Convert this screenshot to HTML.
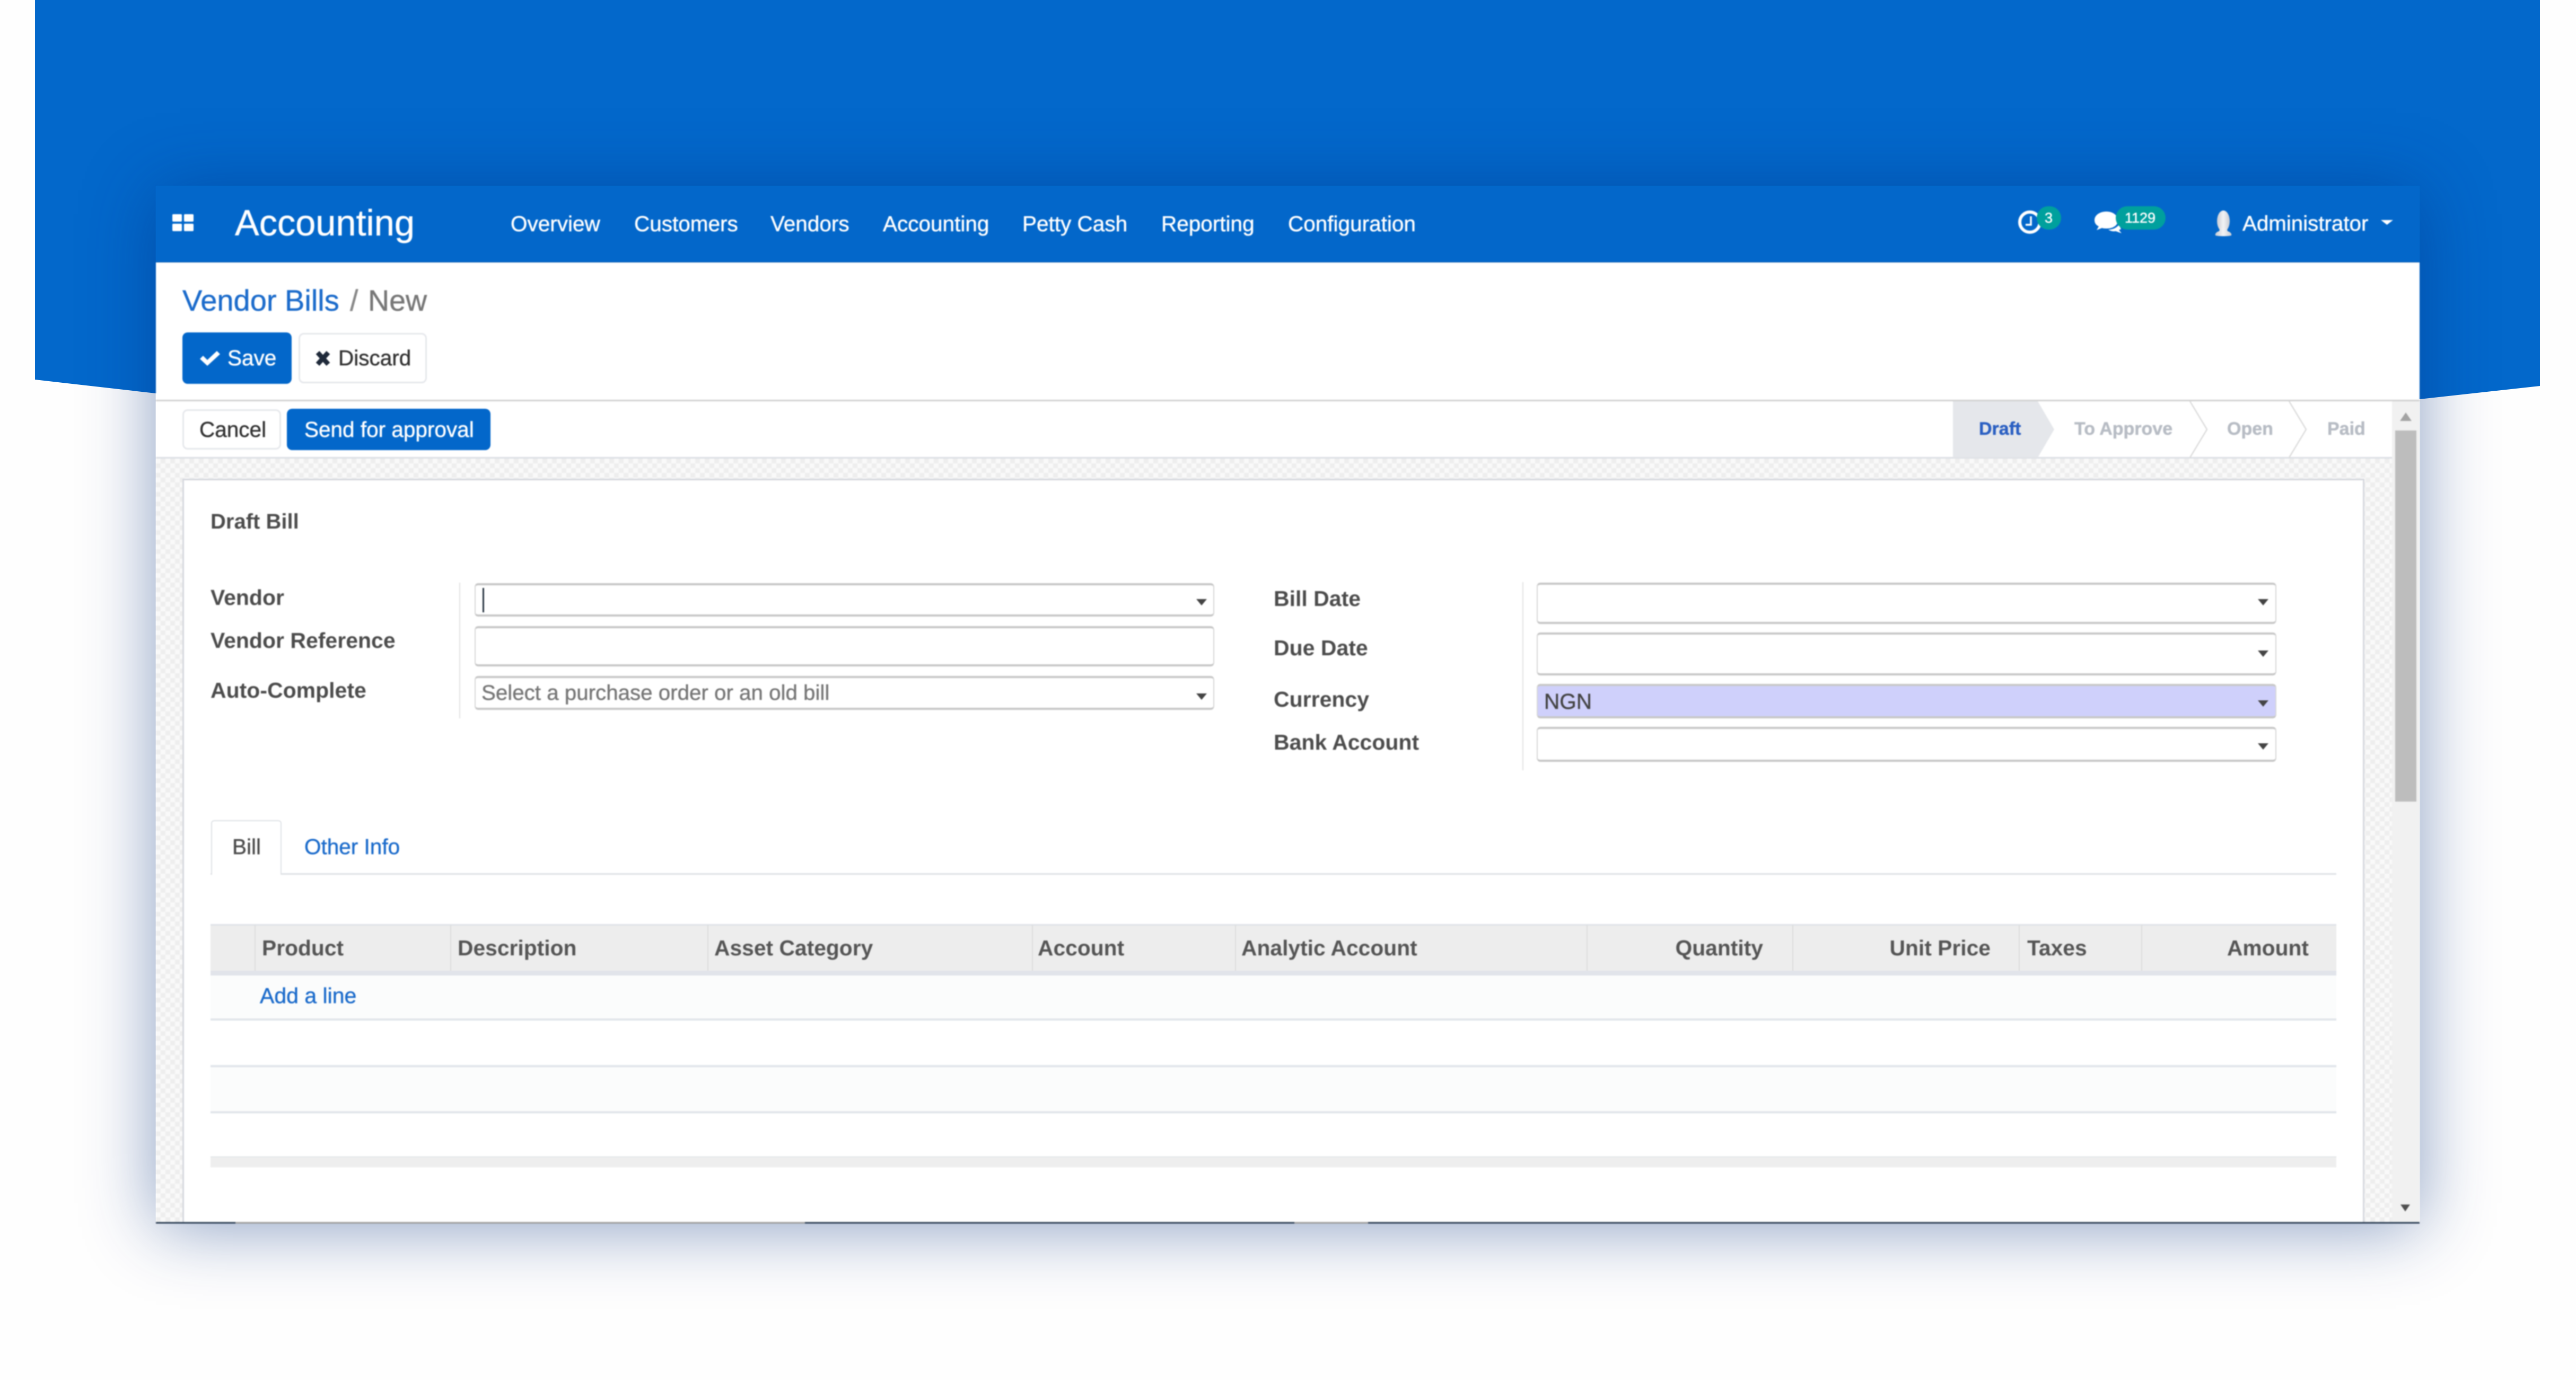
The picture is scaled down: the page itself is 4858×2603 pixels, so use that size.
<!DOCTYPE html>
<html lang="en"><head><meta charset="utf-8"><title>Vendor Bills / New</title>
<style>
html,body{margin:0;padding:0;background:#fefefe}
#page{position:relative;width:4858px;height:2603px;overflow:hidden;background:#fefefe;font-family:"Liberation Sans",Arial,sans-serif;font-size:40.5px;color:#4c4c4c}
#page div,#page svg,#page span{position:absolute}
#blue{left:0;top:0;width:4858px;height:800px;background:#0368cb;clip-path:polygon(66px 0,4790px 0,4790px 728px,4563px 753px,294px 742px,66px 716px)}
#shadow{left:294px;top:351px;width:4269px;height:1956px;box-shadow:0 8px 150px rgba(0,45,125,.46)}
#ui{left:0;top:0;width:4858px;height:2603px;filter:blur(1.1px)}
.t{line-height:0;white-space:nowrap;-webkit-text-stroke:.5px currentColor}
.b{font-weight:bold;-webkit-text-stroke:0}
.w{color:#fff}
.l{color:#1b6bcb}
.btn{box-sizing:border-box;border-radius:10px}
.pri{background:#0367ca}
.sec{background:#fff;border:3px solid #e6e8ec}
.in{box-sizing:border-box;left:895px;width:1395px;background:#fff;border:2px solid #d8d8d8;border-top:4px solid #c8c8c8;border-bottom:4px solid #c8c8c8;border-radius:7px}
.r{left:2898px}
.car{width:0;height:0;border-left:10px solid transparent;border-right:10px solid transparent;border-top:12px solid #444}
.sep{top:1745px;width:2px;height:86px;background:#dcdcdc}
.ln{left:397px;width:4009px;height:4px;background:#e1e5ea}
.st{font-size:34px;font-weight:bold;color:#b7bcc4}
.h{font-size:40.8px;color:#555;top:1788px}
.lb{font-size:41px}
</style></head><body>
<div id="page">
<div id="blue"></div>
<div id="shadow"></div>
<div id="ui">
  <!-- nav -->
  <div style="left:294px;top:351px;width:4269px;height:143px;background:#0367ca;border-bottom:3px solid #0354a8"></div>
  <svg style="left:0;top:0" width="4858" height="520" viewBox="0 0 4858 520">
    <g fill="#fff"><rect x="325" y="404" width="18" height="14" rx="2"/><rect x="347" y="404" width="18" height="14" rx="2"/><rect x="325" y="422" width="18" height="14" rx="2"/><rect x="347" y="422" width="18" height="14" rx="2"/></g>
    <!-- clock -->
    <circle cx="3828" cy="419" r="19" fill="none" stroke="#fff" stroke-width="6"/>
    <path d="M3830 408V424H3820" fill="none" stroke="#fff" stroke-width="3.5"/>
    <!-- chat -->
    <path fill="#fff" d="M3972 399C3986 399 3994 407 3994 416C3994 425 3985 431 3974 431C3970 431 3967 431 3964 430L3954 434L3958 427C3952 424 3950 420 3950 415C3950 406 3960 399 3972 399Z"/>
    <path fill="#fff" d="M3976 433C3986 433 3992 429 3996 424L4000 432L3996 434L4001 440L3990 436C3985 437 3980 436 3976 433Z"/>
    <!-- avatar -->
    <defs><linearGradient id="av" x1="0" x2="1"><stop offset="0" stop-color="#c8ccd4"/><stop offset=".5" stop-color="#f2f3f5"/><stop offset="1" stop-color="#c8ccd4"/></linearGradient></defs>
    <ellipse cx="4193" cy="417" rx="12" ry="20" fill="url(#av)"/>
    <path d="M4187 430H4199L4201 436C4207 438 4209 441 4208 444C4205 446 4181 446 4178 444C4177 441 4179 438 4185 436Z" fill="url(#av)"/>
    <path d="M4490 415H4513L4501.5 424Z" fill="#fff"/>
  </svg>
  <div class="t w" style="left:443px;top:421px;font-size:68.5px">Accounting</div>
  <div class="t w" style="left:963px;top:422px">Overview</div>
  <div class="t w" style="left:1196px;top:422px">Customers</div>
  <div class="t w" style="left:1453px;top:422px">Vendors</div>
  <div class="t w" style="left:1665px;top:422px">Accounting</div>
  <div class="t w" style="left:1928px;top:422px">Petty Cash</div>
  <div class="t w" style="left:2190px;top:422px">Reporting</div>
  <div class="t w" style="left:2429px;top:422px">Configuration</div>
  <div style="left:3841px;top:389px;width:46px;height:44px;border-radius:22px;background:#00a09d"></div>
  <div class="t w" style="left:3856px;top:411px;font-size:27px">3</div>
  <div style="left:3990px;top:389px;width:94px;height:44px;border-radius:22px;background:#00a09d"></div>
  <div class="t w" style="left:4007px;top:411px;font-size:27px">1129</div>
  <div class="t w" style="left:4229px;top:422px;font-size:40.3px">Administrator</div>

  <!-- control panel -->
  <div style="left:294px;top:495px;width:4269px;height:261px;background:#fff"></div>
  <div class="t l" style="left:344px;top:567px;font-size:56px">Vendor Bills</div>
  <div class="t" style="left:660px;top:567px;font-size:55.5px;color:#888">/</div>
  <div class="t" style="left:694px;top:567px;font-size:55.5px;color:#777">New</div>
  <div class="btn pri" style="left:344px;top:627px;width:206px;height:97px"></div>
  <div class="btn sec" style="left:563px;top:628px;width:242px;height:95px"></div>
  <svg style="left:0;top:600px" width="900" height="120" viewBox="0 600 900 120">
    <path fill="#fff" d="M377 677L383 671L391 679L409 662L415 668L391 690Z"/>
    <path stroke="#1f2a3a" stroke-width="9" d="M599 665L619 687M619 665L599 687"/>
  </svg>
  <div class="t w" style="left:429px;top:675px">Save</div>
  <div class="t" style="left:638px;top:675px;color:#333">Discard</div>

  <!-- statusbar -->
  <div style="left:294px;top:754px;width:4269px;height:111px;background:#fff;border-top:3px solid #d2d2d2;border-bottom:3px solid #dcdfe4;box-sizing:border-box"></div>
  <div class="btn sec" style="left:344px;top:772px;width:186px;height:76px"></div>
  <div class="btn pri" style="left:541px;top:771px;width:384px;height:78px"></div>
  <div class="t" style="left:376px;top:810px;color:#333">Cancel</div>
  <div class="t w" style="left:574px;top:810px">Send for approval</div>
  <svg style="left:3680px;top:757px" width="840" height="106" viewBox="3680 757 840 106">
    <path d="M3683 757H3843L3874 810L3843 863H3683Z" fill="#e5e7eb"/>
    <path d="M4130 757L4162 810L4130 863M4317 757L4349 810L4317 863" fill="none" stroke="#dcdcdc" stroke-width="2.5"/>
  </svg>
  <div class="t st" style="left:3732px;top:809px;color:#2a5fc2">Draft</div>
  <div class="t st" style="left:3912px;top:809px">To Approve</div>
  <div class="t st" style="left:4200px;top:809px">Open</div>
  <div class="t st" style="left:4389px;top:809px">Paid</div>

  <!-- sheet bg -->
  <div style="left:294px;top:865px;width:4217px;height:1441px;background:repeating-conic-gradient(#eeeeee 0 25%,#f9f9f9 0 50%) 0 0/18px 18px"></div>
  <div style="left:344px;top:903px;width:4115px;height:1403px;box-sizing:border-box;background:#fff;border:3px solid #d6d8de;border-bottom:0"></div>

  <!-- scrollbar -->
  <div style="left:4511px;top:757px;width:52px;height:1549px;background:#f1f1f1"></div>
  <div style="left:4517px;top:812px;width:40px;height:700px;background:#bdbdbd"></div>
  <svg style="left:4511px;top:757px" width="52" height="1549" viewBox="4511 757 52 1549">
    <path d="M4537 778L4548 794H4526Z" fill="#a3a3a3"/>
    <path d="M4527 2272H4545L4536 2285Z" fill="#505050"/>
  </svg>

  <!-- form -->
  <div class="t b" style="left:397px;top:984px;font-size:40px">Draft Bill</div>
  <div class="t b lb" style="left:397px;top:1127px">Vendor</div>
  <div class="t b lb" style="left:397px;top:1208px">Vendor Reference</div>
  <div class="t b lb" style="left:397px;top:1302px">Auto-Complete</div>
  <div style="left:866px;top:1099px;width:2px;height:256px;background:#e2e2e2"></div>
  <div class="in" style="top:1100px;height:63px"></div>
  <div style="left:910px;top:1109px;width:3px;height:46px;background:#26323f"></div>
  <div class="car" style="left:2256px;top:1130px"></div>
  <div class="in" style="top:1181px;height:76px"></div>
  <div class="in" style="top:1275px;height:64px"></div>
  <div class="t" style="left:908px;top:1307px;color:#777;font-size:40.3px">Select a purchase order or an old bill</div>
  <div class="car" style="left:2256px;top:1308px"></div>

  <div class="t b lb" style="left:2402px;top:1129px">Bill Date</div>
  <div class="t b lb" style="left:2402px;top:1222px">Due Date</div>
  <div class="t b lb" style="left:2402px;top:1319px">Currency</div>
  <div class="t b lb" style="left:2402px;top:1400px">Bank Account</div>
  <div style="left:2871px;top:1098px;width:2px;height:355px;background:#e2e2e2"></div>
  <div class="in r" style="top:1099px;height:78px"></div>
  <div class="car" style="left:4258px;top:1130px"></div>
  <div class="in r" style="top:1193px;height:81px"></div>
  <div class="car" style="left:4258px;top:1227px"></div>
  <div class="in r" style="top:1290px;height:65px;background:#cfd0fb"></div>
  <div class="t" style="left:2912px;top:1323px;color:#444">NGN</div>
  <div class="car" style="left:4258px;top:1321px"></div>
  <div class="in r" style="top:1371px;height:66px"></div>
  <div class="car" style="left:4258px;top:1402px"></div>

  <!-- tabs -->
  <div style="left:397px;top:1647px;width:4009px;height:3px;background:#dfe2e6"></div>
  <div style="left:398px;top:1547px;width:133px;height:103px;box-sizing:border-box;background:#fff;border:2px solid #dfe2e6;border-bottom:0;border-radius:6px 6px 0 0"></div>
  <div class="t" style="left:438px;top:1597px">Bill</div>
  <div class="t l" style="left:574px;top:1597px">Other Info</div>

  <!-- table -->
  <div style="left:397px;top:1743px;width:4009px;height:88px;background:#ededed;border-top:3px solid #dfe3e8;box-sizing:border-box"></div>
  <div style="left:397px;top:1831px;width:4009px;height:9px;background:#e1e4ea"></div>
  <div class="sep" style="left:480px"></div><div class="sep" style="left:849px"></div><div class="sep" style="left:1334px"></div><div class="sep" style="left:1946px"></div><div class="sep" style="left:2329px"></div><div class="sep" style="left:2992px"></div><div class="sep" style="left:3380px"></div><div class="sep" style="left:3807px"></div><div class="sep" style="left:4038px"></div>
  <div class="t b h" style="left:494px">Product</div>
  <div class="t b h" style="left:863px">Description</div>
  <div class="t b h" style="left:1347px">Asset Category</div>
  <div class="t b h" style="left:1957px">Account</div>
  <div class="t b h" style="left:2341px">Analytic Account</div>
  <div class="t b h" style="right:1533px">Quantity</div>
  <div class="t b h" style="right:1104px">Unit Price</div>
  <div class="t b h" style="left:3823px">Taxes</div>
  <div class="t b h" style="right:504px">Amount</div>
  <div style="left:397px;top:1840px;width:4009px;height:82px;background:#fbfcfc"></div>
  <div class="ln" style="top:1921px"></div>
  <div class="t l" style="left:490px;top:1878px;font-size:41px">Add a line</div>
  <div style="left:397px;top:2011px;width:4009px;height:86px;background:#fbfcfc"></div>
  <div class="ln" style="top:2009px"></div>
  <div class="ln" style="top:2096px"></div>
  <div style="left:397px;top:2181px;width:4009px;height:21px;background:#eeeeee;border-top:2px solid #e4e7eb;box-sizing:border-box"></div>

  <!-- bottom edge -->
  <div style="left:294px;top:2305px;width:4269px;height:3px;background:#9c9c9c"></div>
  <div style="left:294px;top:2305px;width:150px;height:3px;background:#2d3f55"></div>
  <div style="left:1518px;top:2305px;width:923px;height:3px;background:#2d3f55"></div>
  <div style="left:2580px;top:2305px;width:1983px;height:3px;background:#2d3f55"></div>
</div>
</div>
</body></html>
